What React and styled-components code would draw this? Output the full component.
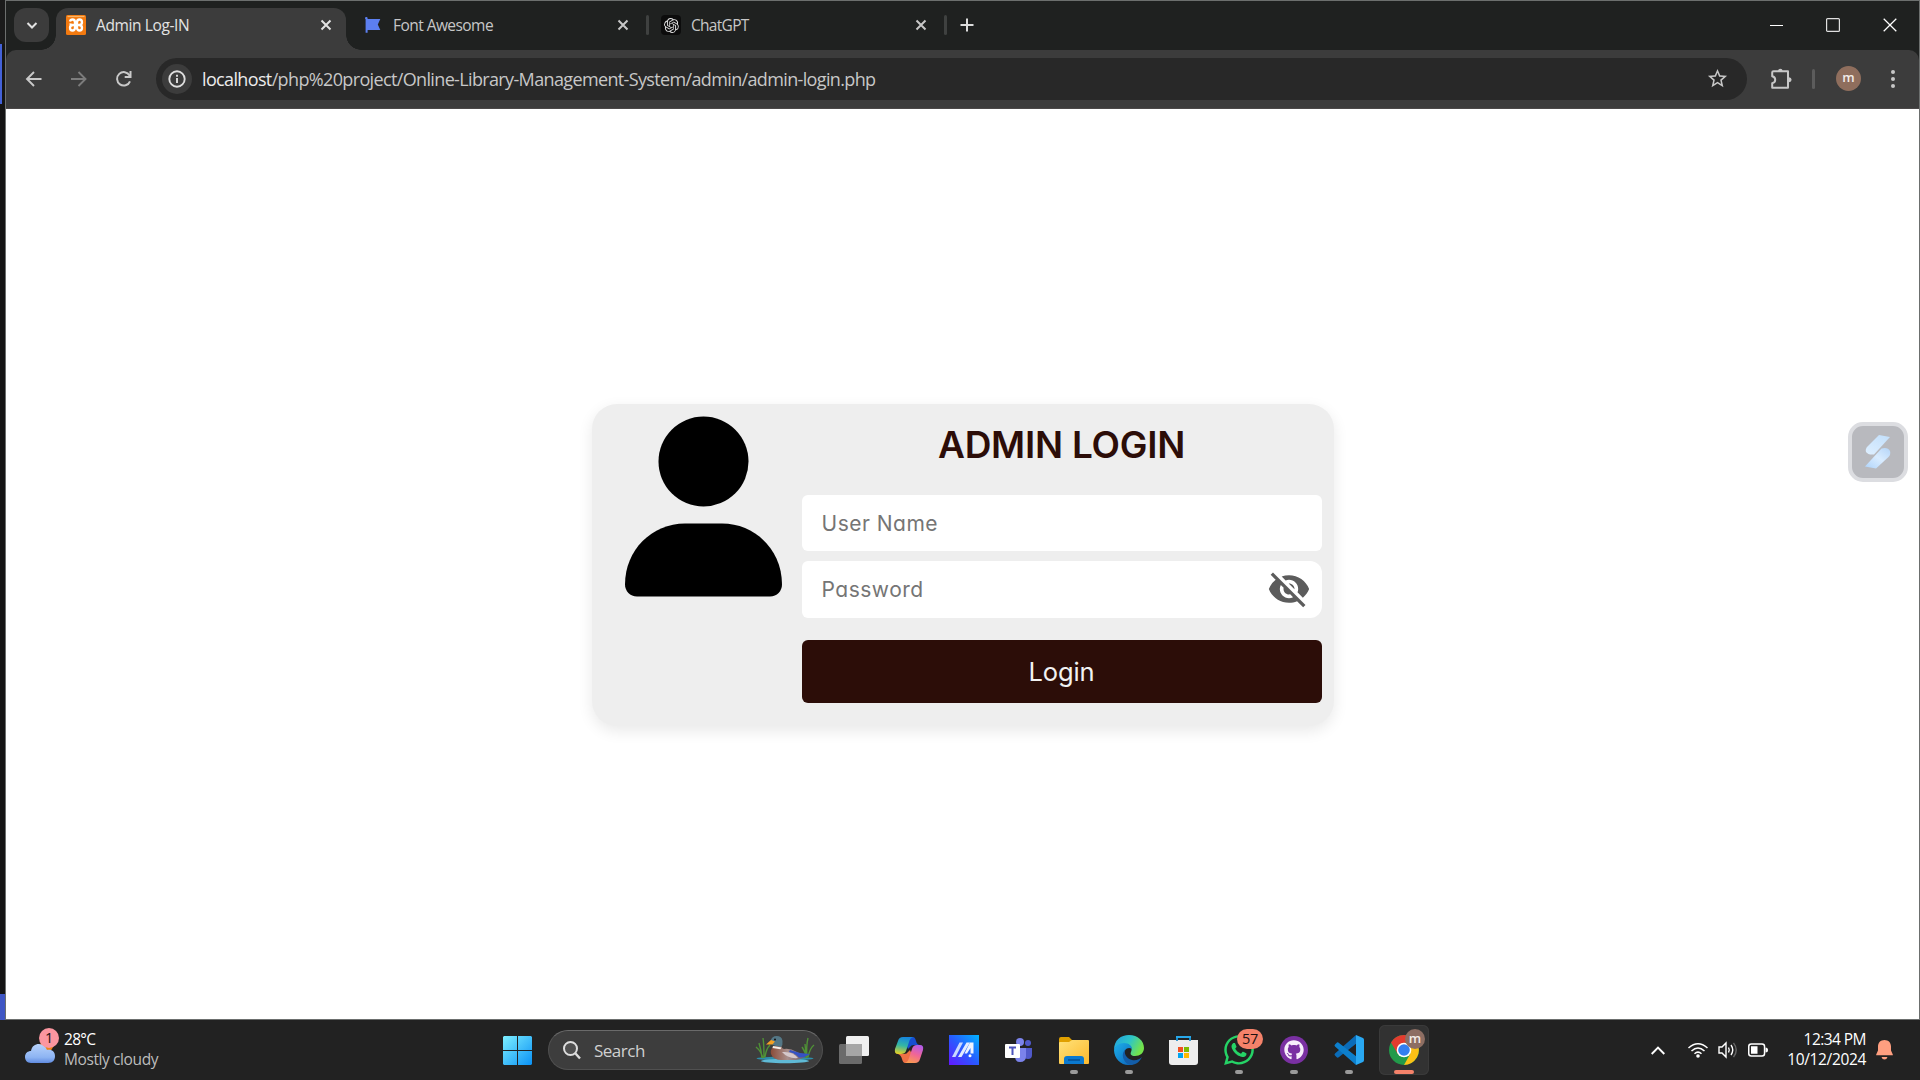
import React from "react";
import styled, { createGlobalStyle } from "styled-components";
import { MdVisibilityOff, MdStarBorder } from "react-icons/md";
import { FaGithub, FaWhatsapp } from "react-icons/fa";
import { SiOpenai } from "react-icons/si";

const uiFont = `"Open Sans", "Noto Sans", sans-serif`;
const pageFont = `Inter, "Liberation Sans", sans-serif`;

const GlobalStyle = createGlobalStyle`
  * { box-sizing: border-box; }
  html, body { margin: 0; padding: 0; background: #222; overflow: hidden; }
  button, input { font: inherit; border: 0; padding: 0; background: none; color: inherit; }
  svg { display: block; flex: none; overflow: visible; }
`;

const Desktop = styled.div`
  width: 1920px;
  height: 1080px;
  display: flex;
  flex-direction: column;
  font-family: ${uiFont};
`;

const Workspace = styled.div`
  display: flex;
  height: 1020px;
`;

const BackdropEdge = styled.div`
  width: 5px;
  display: flex;
  flex-direction: column;
  background: #141414;
`;

const EdgeSegment = styled.div`
  width: ${(p) => p.$width || 5}px;
  height: ${(p) => p.$height}px;
  background: ${(p) => p.$color};
`;

const BrowserWindow = styled.div`
  flex: 1;
  display: flex;
  flex-direction: column;
  border: 1px solid #6c6f6e;
  background: #1f2120;
`;

const TabStrip = styled.div`
  height: 49px;
  display: flex;
  padding: 7px 0 0 8px;
  background: #1f2120;
`;

const TabMenuButton = styled.button`
  width: 35px;
  height: 34px;
  margin-right: 7px;
  border-radius: 12px;
  background: #3c3c3c;
  display: flex;
  align-items: center;
  justify-content: center;
  color: #e3e3e3;
`;

const Tab = styled.div`
  position: relative;
  width: ${(p) => p.$width}px;
  height: 42px;
  padding: 0 ${(p) => p.$end || 12}px 8px ${(p) => p.$start || 10}px;
  display: flex;
  align-items: center;
  border-radius: 12px 12px 0 0;
  background: ${(p) => (p.$active ? "#3c3c3c" : "transparent")};
  color: ${(p) => (p.$active ? "#e3e3e3" : "#c7c7c7")};

  &::before,
  &::after {
    content: "";
    display: ${(p) => (p.$active ? "block" : "none")};
    position: absolute;
    bottom: 0;
    width: 15px;
    height: 15px;
  }
  &::before {
    left: -15px;
    background: radial-gradient(circle at 0 0, transparent 14.5px, #3c3c3c 15px);
  }
  &::after {
    right: -15px;
    background: radial-gradient(circle at 100% 0, transparent 14.5px, #3c3c3c 15px);
  }
`;

const TabIcon = styled.span`
  width: 20px;
  height: 20px;
  margin-right: 10px;
  display: flex;
  align-items: center;
  justify-content: center;
  border-radius: ${(p) => p.$radius || 0}px;
  background: ${(p) => p.$background || "transparent"};
  color: ${(p) => p.$color};
`;

const TabTitle = styled.span`
  flex: 1;
  font-size: 15.5px;
  line-height: 20px;
  letter-spacing: ${(p) => p.$spacing}px;
  white-space: nowrap;
`;

const CloseSlot = styled.button`
  width: 16px;
  height: 16px;
  display: flex;
  align-items: center;
  justify-content: center;
`;

const TabDivider = styled.span`
  width: 3px;
  height: 20px;
  margin: 7px ${(p) => p.$after}px 0 ${(p) => p.$before}px;
  border-radius: 2px;
  background: #3f4140;
`;

const NewTabButton = styled.button`
  width: 16px;
  height: 34px;
  display: flex;
  align-items: center;
  justify-content: center;
  color: #dcdcdc;
`;

const WindowControls = styled.div`
  margin-left: auto;
  padding: 0 22px 8px 0;
  display: flex;
  align-items: center;
  gap: 43px;
  color: #fff;
`;

const Toolbar = styled.div`
  height: 59px;
  padding: 8px 0 9px 20px;
  display: flex;
  align-items: center;
  background: #3c3c3c;
  border-radius: 10px 10px 0 0;
  border-bottom: 1px solid #4b4848;
`;

const NavButton = styled.button`
  width: 16px;
  margin-right: 29px;
  display: flex;
  justify-content: center;
  color: ${(p) => (p.$disabled ? "#7c7c7c" : "#c9c9c9")};
`;

const AddressBar = styled.div`
  width: 1591px;
  height: 42px;
  margin-left: -5px;
  padding: 0 18px 0 6px;
  display: flex;
  align-items: center;
  border-radius: 21px;
  background: #282828;
  color: #c7c7c7;
`;

const SiteInfo = styled.span`
  width: 30px;
  height: 30px;
  margin-right: 10px;
  border-radius: 50%;
  background: #3c3c3c;
  display: flex;
  align-items: center;
  justify-content: center;
`;

const Url = styled.span`
  flex: 1;
  font-size: 18px;
  letter-spacing: -0.64px;
  line-height: 24px;
  white-space: nowrap;
`;

const Host = styled.span`
  color: #ececec;
`;

const ToolbarActions = styled.div`
  display: flex;
  align-items: center;
  margin-left: 24px;
  color: #c7c7c7;
`;

const ToolbarDivider = styled.span`
  width: 3px;
  height: 20px;
  margin: 0 21px 0 20px;
  border-radius: 2px;
  background: #5c5c5c;
`;

const MenuButton = styled.button`
  margin-left: 30px;
  display: flex;
`;

const Avatar = styled.span`
  width: ${(p) => p.$size}px;
  height: ${(p) => p.$size}px;
  border-radius: 50%;
  background: ${(p) => p.$color || "#8f6e5d"};
  color: #f3ece8;
  font-size: 13px;
  font-weight: 600;
  line-height: ${(p) => p.$size - 2}px;
  text-align: center;
`;

const Page = styled.main`
  flex: 1;
  display: grid;
  grid-template-columns: 1fr 742px 1fr;
  padding-top: 295px;
  background: #fff;
  font-family: ${pageFont};
  font-feature-settings: "cv11";
`;

const LoginCard = styled.section`
  grid-column: 2;
  width: 742px;
  height: 322px;
  padding: 12px 12px 0 33px;
  display: flex;
  justify-content: space-between;
  border-radius: 25px;
  background: #eee;
  box-shadow: 0 5px 15px rgba(0, 0, 0, 0.09);
`;

const LoginForm = styled.div`
  width: 520px;
  display: flex;
  flex-direction: column;
`;

const Heading = styled.h1`
  height: 56px;
  margin: 0 0 23px;
  text-align: center;
  font-size: 37px;
  line-height: 58px;
  font-weight: 600;
  letter-spacing: -0.25px;
  color: #2c0d08;
`;

const Field = styled.label`
  height: ${(p) => p.$height}px;
  margin-bottom: ${(p) => p.$gap}px;
  padding: 0 11px ${(p) => p.$lift || 0}px 20px;
  display: flex;
  align-items: center;
  border-radius: ${(p) => p.$radius};
  background: #fff;
  color: #5c5c5c;
`;

const TextInput = styled.input`
  flex: 1;
  min-width: 0;
  height: 30px;
  outline: none;
  font-size: 21px;
  letter-spacing: ${(p) => p.$spacing}px;
  font-feature-settings: inherit;

  &::placeholder {
    color: #757575;
    opacity: 1;
  }
`;

const SubmitButton = styled.button`
  height: 63px;
  padding-bottom: 1px;
  border-radius: 6px;
  background: #2c0d08;
  color: #f2f2f2;
  font-size: 25.5px;
  letter-spacing: -0.1px;
`;

const SideWidget = styled.button`
  width: 60px;
  height: 60px;
  margin: 18px 11px 0 0;
  justify-self: end;
  display: flex;
  align-items: center;
  justify-content: center;
  border: 4px solid #dcdde1;
  border-radius: 15px;
  background: #b8b9be;
`;

const Taskbar = styled.footer`
  height: 60px;
  display: flex;
  align-items: center;
  background: #222;
  color: #fff;
`;

const Weather = styled.div`
  width: 478px;
  height: 60px;
  padding: 10px 0 0 25px;
  display: flex;
`;

const WeatherIcon = styled.div`
  width: 39px;
  padding-top: 14px;
  position: relative;
`;

const WeatherReport = styled.div`
  margin-top: -1px;
`;

const Badge = styled.span`
  position: absolute;
  left: ${(p) => p.$left}px;
  top: ${(p) => p.$top}px;
  width: ${(p) => p.$width}px;
  height: 20px;
  border-radius: 10px;
  background: ${(p) => p.$color};
  color: #1c1111;
  font-size: 14.5px;
  line-height: 20px;
  letter-spacing: -0.4px;
  text-align: center;
`;

const WeatherText = styled.div`
  font-size: 15.5px;
  line-height: 20px;
  letter-spacing: ${(p) => p.$spacing}px;
  color: ${(p) => p.$color};
`;

const StartButton = styled.button`
  width: 54px;
  display: flex;
  justify-content: flex-end;
`;

const SearchBox = styled.div`
  width: 275px;
  height: 40px;
  margin: 0 4px 0 16px;
  padding: 0 8px 0 14px;
  display: flex;
  align-items: center;
  border: 1px solid #505050;
  border-top-color: #6a6a6a;
  border-radius: 20px;
  background: #3d3d3d;
`;

const SearchLabel = styled.span`
  flex: 1;
  margin-left: 13px;
  font-size: 17px;
  letter-spacing: -0.5px;
  color: #d0d0d0;
`;

const AppList = styled.div`
  display: flex;
  padding-left: 2px;
`;

const TaskButton = styled.div`
  position: relative;
  width: 50px;
  height: 50px;
  margin-right: 5px;
  display: flex;
  align-items: center;
  justify-content: center;
  border-radius: 6px;
  background: ${(p) => (p.$active ? "#323232" : "transparent")};
  box-shadow: ${(p) => (p.$active ? "inset 0 0 0 1px #3a3a3a" : "none")};

  &::after {
    content: "";
    display: ${(p) => (p.$running ? "block" : "none")};
    position: absolute;
    bottom: 1px;
    left: 50%;
    width: ${(p) => (p.$active ? 20 : 8)}px;
    height: 4px;
    transform: translateX(-50%);
    border-radius: 2px;
    background: ${(p) => (p.$active ? "#f4826a" : "#9a9a9a")};
  }
`;

const Overlay = styled.span`
  position: absolute;
  left: 26px;
  top: 4px;
  display: flex;
`;

const Tray = styled.div`
  margin-left: auto;
  padding-right: 27px;
  display: flex;
  align-items: center;
  color: #fff;
`;

const TrayIcon = styled.span`
  display: flex;
  margin-right: ${(p) => p.$gap}px;
`;

const Clock = styled.div`
  width: 80px;
  margin: -2px 10px 0 0;
  text-align: right;
  font-size: 15.5px;
  line-height: 20px;
  white-space: nowrap;
`;

const ClockLine = styled.div`
  letter-spacing: ${(p) => p.$spacing}px;
`;

const CloseGlyph = ({ size = 10, weight = 2 }) => (
  <svg width={size} height={size} viewBox="0 0 10 10" fill="none" stroke="currentColor" strokeWidth={weight}>
    <path d="M.5.5l9 9M9.5.5l-9 9" />
  </svg>
);

const TabClose = () => (
  <CloseSlot>
    <CloseGlyph />
  </CloseSlot>
);

const ArrowGlyph = ({ flip }) => (
  <svg width="16" height="16" viewBox="0 0 16 16" fill="none" stroke="currentColor" strokeWidth="1.9">
    <path d={flip ? "M0 8h14M7.500 1l7 7-7 7" : "M15.500 8H1.500M8 1L1 8l7 7"} />
  </svg>
);

const ReloadGlyph = () => (
  <svg width="16" height="16" viewBox="0 0 16 16" fill="none" stroke="currentColor" strokeWidth="2">
    <path d="M14 10.300A6.700 6.700 0 1 1 13.600 4.500L14 5.500" />
    <path d="M14.500 0V6H8.700" />
  </svg>
);

const InfoGlyph = () => (
  <svg width="18" height="18" viewBox="0 0 18 18" fill="none" stroke="#dedede" strokeWidth="1.9">
    <circle cx="9" cy="9" r="7.700" />
    <path d="M9 8v5M9 4.800v1.900" />
  </svg>
);

const PuzzleGlyph = () => (
  <svg width="21" height="20" viewBox="0 0 21 20">
    <path
      d="M2.500 2.300H17V18.700H1.200V14.300Q4.200 13.600 4.200 10.800T1.200 7.300V3.500Q1.200 2.300 2.500 2.300Z"
      fill="none"
      stroke="currentColor"
      strokeWidth="2"
      strokeLinejoin="round"
    />
    <path d="M7 2Q7-.3 9.300-.3T11.600 2ZM18 8.200Q20.600 8.400 20.600 10.800T18 13.300Z" fill="currentColor" />
  </svg>
);

const DotsGlyph = () => (
  <svg width="4" height="18" viewBox="0 0 4 18" fill="currentColor">
    <circle cx="2" cy="2" r="2" />
    <circle cx="2" cy="9" r="2" />
    <circle cx="2" cy="16" r="2" />
  </svg>
);

const XamppMark = () => (
  <svg width="20" height="20" viewBox="0 0 20 20" fill="none">
    <rect width="20" height="20" rx="1.500" fill="#f37a10" />
    <path d="M1.500 1.500H18.500" stroke="#f9b568" strokeWidth="1.200" />
    <path
      d="M4 6.500Q4.500 4.500 6.500 4.500Q9 4.500 9 7.500V12.500Q9 15.500 6.500 15.500T4 12.700Q4 10 7 10H13Q16 10 16 12.700T13.500 15.500Q11 15.500 11 12.500V7.500Q11 4.500 13.500 4.500T16 7.300Q16 10 13 10H7Q4.500 10 4 8.500"
      stroke="#fff"
      strokeWidth="2.300"
    />
  </svg>
);

const FlagMark = () => (
  <svg width="16" height="16" viewBox="0 0 16 16" fill="#5c7ff0">
    <path d="M0 1.200A1.300 1.300 0 0 1 2.600 1.200V2H15.300L12.800 7.500L15.300 13H2.600V15.800H.6V2.200Q0 1.800 0 1.200Z" />
  </svg>
);

const PersonFigure = () => (
  <svg width="157" height="181" viewBox="0 0 157 181">
    <circle cx="78.500" cy="45.500" r="45" />
    <path d="M60 107.500H97C130 107.500 157 134 157 168.500C157 175 152 180.500 145 180.500H12C5 180.500 0 175 0 168.500C0 134 27 107.500 60 107.500Z" />
  </svg>
);

const WidgetGlyph = () => (
  <svg width="26" height="34" viewBox="0 0 26 34">
    <defs>
      <linearGradient id="widgetUpper" x1=".8" y1="0" x2=".2" y2="1">
        <stop offset="0" stopColor="#c4e0fb" />
        <stop offset="1" stopColor="#dceeff" />
      </linearGradient>
      <linearGradient id="widgetLower" x1="1" y1="0" x2=".1" y2="1">
        <stop offset="0" stopColor="#b5d5f8" />
        <stop offset=".5" stopColor="#d9ecff" />
        <stop offset="1" stopColor="#b3d6fb" />
      </linearGradient>
    </defs>
    <path d="M14 0L25 2L9 19.500Q3 20 1 17Q0 14 2.500 11.500Z" fill="url(#widgetUpper)" />
    <path d="M16.500 13.500Q23 12 25 16Q26 19.500 23.500 22L11 33.500L0 31.500Z" fill="url(#widgetLower)" />
  </svg>
);

const CloudIcon = () => (
  <svg width="30" height="20" viewBox="0 0 30 20">
    <defs>
      <linearGradient id="cloud" x2="0" y2="1">
        <stop offset="0" stopColor="#b7d2fb" />
        <stop offset=".7" stopColor="#8db4f3" />
        <stop offset="1" stopColor="#608be0" />
      </linearGradient>
    </defs>
    <circle cx="22" cy="1" r="6.500" fill="#f08018" />
    <path d="M6 19C2 19 0 16 0 13C0 9 3 7 6 7C7 2 10 0 14 0C18 0 21 3 22 6C27 5 30 8 30 12C30 16 28 19 23 19Z" fill="url(#cloud)" />
  </svg>
);

const WindowsIcon = () => (
  <svg width="29" height="29" viewBox="0 0 29 29">
    <defs>
      <linearGradient id="win" gradientUnits="userSpaceOnUse" x1="0" y1="0" x2="29" y2="29">
        <stop offset="0" stopColor="#7defff" />
        <stop offset="1" stopColor="#0a91f5" />
      </linearGradient>
    </defs>
    <path d="M1 0H14V14H0V1ZM15 0H28L29 1V14H15ZM0 15H14V29H1L0 28ZM15 15H29V28L28 29H15Z" fill="url(#win)" />
  </svg>
);

const SearchGlyph = () => (
  <svg width="18" height="18" viewBox="0 0 18 18" fill="none" stroke="#dedede" strokeWidth="2">
    <circle cx="7.500" cy="7.500" r="6.500" fill="#505050" />
    <path d="M12.300 12.300L17 17.500" strokeWidth="2.400" />
  </svg>
);

const DuckIcon = () => (
  <svg width="58" height="28" viewBox="0 0 58 28">
    <defs>
      <linearGradient id="duckBody" x2="1">
        <stop offset="0" stopColor="#8b4c38" />
        <stop offset=".45" stopColor="#a98f8c" />
        <stop offset="1" stopColor="#5e5264" />
      </linearGradient>
    </defs>
    <ellipse cx="29" cy="22.500" rx="28.500" ry="1.800" fill="#2d8fab" />
    <ellipse cx="29" cy="25" rx="24" ry="2.200" fill="#5fbad6" />
    <g stroke="#4f9136" strokeWidth="1.400" fill="none">
      <path d="M8 22Q8 8 7 2M7 22Q5 15 0 11M9 21Q10 13 14 9M6 22Q5 13 3 7" />
      <path d="M51 22Q50 10 52 2M51 21Q48 14 46 11M52 21Q54 12 58 9M50 22Q50 16 49 8" />
    </g>
    <path d="M17 11Q14 14 15 18Q17 24 26 24H40Q48 23 52 18Q45 19 41 16Q34 12 28 13Q24 12 26 6Z" fill="url(#duckBody)" />
    <path d="M34 14L44 17L54 18Q48 22 43 21.500Q39 17 33 16Z" fill="#3552c4" />
    <path d="M26 16Q37 15 42 22Q32 23 26 16Z" fill="#d5c8cb" />
    <path d="M14.500 5Q16 0 20.500 0Q26 0 26.500 5Q27 9 25 11L18 9.500Q15 8 14.500 5Z" fill="#547786" />
    <path d="M15 4L10 8.500L16.500 8.500L19 5.500Z" fill="#f4a124" />
    <path d="M17 10L25.500 11.500L24.500 13.200L16.500 12Z" fill="#f4eee9" />
    <circle cx="19" cy="3.500" r="1" fill="#111" />
  </svg>
);

const TaskViewIcon = () => (
  <svg width="30" height="28" viewBox="0 0 30 28">
    <rect x="7" width="23" height="20" rx="1.500" fill="#f0f0f0" />
    <rect y="8" width="23" height="20" rx="1.500" fill="#6b6b6b" />
    <path d="M7 8H23V20H7Z" fill="#a6a6a6" />
  </svg>
);

const CopilotIcon = () => (
  <svg width="28" height="26" viewBox="0 0 28 26">
    <defs>
      <linearGradient id="copA" x1=".5" y1="0" x2=".3" y2="1">
        <stop offset="0" stopColor="#1686df" />
        <stop offset=".5" stopColor="#34b7a3" />
        <stop offset="1" stopColor="#e2cf27" />
      </linearGradient>
      <linearGradient id="copB" x1=".7" y1="0" x2=".3" y2="1">
        <stop offset="0" stopColor="#b45be8" />
        <stop offset=".5" stopColor="#f06696" />
        <stop offset="1" stopColor="#fa9b50" />
      </linearGradient>
    </defs>
    <path d="M15 0H18Q20 0 21 4Q22 8 25 8H19Q16 8 15 10L13 12L10 5Q11 0 15 0Z" fill="#164ed0" />
    <path d="M8 0H18Q15 1 14 5L11 14Q10 17 6 17H3Q-1 17 0 12L3 4Q4 0 8 0Z" fill="url(#copA)" />
    <path d="M13 26H10Q8 26 7 22Q6 18 3 17H9Q12 17 13 15L15 13L18 20Z" fill="#ed7045" />
    <path d="M20 26H10Q13 25 14 21L17 12Q18 8 22 8H25Q29 8 28 13L25 22Q24 26 20 26Z" fill="url(#copB)" />
  </svg>
);

const AsusIcon = () => (
  <svg width="30" height="30" viewBox="0 0 30 30">
    <defs>
      <linearGradient id="asus" x1="0" y1="1" x2="1" y2="0">
        <stop offset="0" stopColor="#6417ff" />
        <stop offset=".5" stopColor="#285bff" />
        <stop offset="1" stopColor="#00b4ff" />
      </linearGradient>
    </defs>
    <path d="M0 0H30V30H0Z" fill="url(#asus)" />
    <path d="M3 22L10.500 7.500H14L6.500 22Z" fill="#c9d8ff" />
    <path d="M9 22L17.500 7.500H21L12.500 22Z" fill="#e3ebff" />
    <path d="M21 7.500H24.500V18.500H21.500V13L18 18.500H15.500Z" fill="#eef3ff" />
    <circle cx="21" cy="20.800" r="1.500" fill="#fff" />
  </svg>
);

const TeamsIcon = () => (
  <svg width="28" height="25" viewBox="0 0 28 25">
    <circle cx="23" cy="5" r="3" fill="#5059c9" />
    <path d="M18 10H27V17Q27 21 23 21Q20 21 18 19Z" fill="#5059c9" />
    <circle cx="15" cy="4" r="4" fill="#7b83eb" />
    <path d="M10 10H21V18Q21 24 15 24Q10 24 10 18Z" fill="#7b83eb" />
    <rect y="6" width="15" height="14" rx="1" fill="#fff" />
    <path d="M4 9.500H11M7.500 9.500V17" stroke="#4b53bc" strokeWidth="2" />
  </svg>
);

const FolderIcon = () => (
  <svg width="30" height="27" viewBox="0 0 30 27">
    <defs>
      <linearGradient id="folder" x2="1" y2="1">
        <stop offset="0" stopColor="#ffe27a" />
        <stop offset="1" stopColor="#fdb92c" />
      </linearGradient>
    </defs>
    <path d="M0 2Q0 0 2 0H10L13 3H28V12H0Z" fill="#e0a000" />
    <path d="M0 6Q0 5 1 5H10L13 3H29Q30 3 30 4V26Q30 27 29 27H1Q0 27 0 26Z" fill="url(#folder)" />
    <path d="M5 27V22Q5 19 8 19H22Q25 19 25 22V27Z" fill="#0b79cf" />
    <path d="M9 23H21" stroke="#064f93" strokeWidth="1.500" />
  </svg>
);

const EdgeIcon = () => (
  <svg width="30" height="30" viewBox="0 0 30 30">
    <defs>
      <linearGradient id="edgeTop" x2="1" y2=".4">
        <stop offset="0" stopColor="#229fe1" />
        <stop offset=".55" stopColor="#2dc5c8" />
        <stop offset="1" stopColor="#73e34b" />
      </linearGradient>
      <linearGradient id="edgeSide" x2="1" y2="1">
        <stop offset="0" stopColor="#1db0ea" />
        <stop offset="1" stopColor="#0b60b8" />
      </linearGradient>
    </defs>
    <path d="M0 15C0 5 7 0 15 0C24 0 30 6 30 13C30 18 26 21 21 21C17 21 16 19 17 17C19 13 16 9 11 9C5 9 1 12 0 15Z" fill="url(#edgeTop)" />
    <path d="M0 15C1 11 5 8 10 8C15 8 18 11 18 14C14 11 9 15 10 21C11 26 17 28 21 28C12 34 0 26 0 15Z" fill="url(#edgeSide)" />
    <path d="M12 14C9 17 12 24 18 25C22 26 26 24 28 22C25 28 21 30 16 30C9 28 6 18 12 14Z" fill="#135da8" />
  </svg>
);

const StoreIcon = () => (
  <svg width="30" height="29" viewBox="0 0 30 29">
    <path d="M8 6V1H21V6" fill="none" stroke="#28a8ea" strokeWidth="2" />
    <path d="M0 4H29V26Q29 29 26 29H3Q0 29 0 26Z" fill="#ededed" />
    <path d="M8 5V2M21 5V2" stroke="#1687c4" strokeWidth="1.600" />
    <path d="M9 11h5v5H9z" fill="#f25022" />
    <path d="M15 11h5v5h-5z" fill="#7fba00" />
    <path d="M9 17h5v5H9z" fill="#00a4ef" />
    <path d="M15 17h5v5h-5z" fill="#ffb900" />
  </svg>
);

const GithubIcon = () => (
  <svg width="28" height="28" viewBox="0 0 28 28">
    <circle cx="14" cy="14" r="14" fill="#7a30a2" />
    <g transform="translate(4 4)" color="#f7eefb">
      <FaGithub size={20} />
    </g>
  </svg>
);

const VsCodeIcon = () => (
  <svg width="30" height="30" viewBox="0 0 30 30">
    <path d="M22 0L1 18.500Q0 19.500 1 20.500L3 22.500Q4 23 5 22L23 8Z" fill="#0b6cb8" />
    <path d="M22 30L1 11.500Q0 10.500 1 9.500L3 7.500Q4 7 5 8L23 22Z" fill="#0d7fcc" />
    <path d="M22 0L29 3Q30 3.500 30 5V25Q30 26.500 29 27L22 30Z" fill="#29a8f2" />
  </svg>
);

const ChromeIcon = () => (
  <svg width="30" height="30" viewBox="0 0 30 30">
    <circle cx="15" cy="15" r="15" fill="#229a4a" />
    <path d="M15 7.700H28A15 15 0 0 1 15 30L21.300 18.700Z" fill="#fbc116" />
    <path d="M2 7.500A15 15 0 0 1 28.100 7.700H15L8.700 18.700Z" fill="#e33b2e" />
    <circle cx="15" cy="15" r="7.300" fill="#fff" />
    <circle cx="15" cy="15" r="5.800" fill="#337ef0" />
  </svg>
);

const WifiIcon = () => (
  <svg width="20" height="15" viewBox="0 0 20 15" fill="none" stroke="currentColor" strokeWidth="1.500">
    <path d="M.5 5Q10-3.500 19.500 5M3.500 8Q10 2 16.500 8M6.500 10.800Q10 7.500 13.500 10.800" />
    <circle cx="10" cy="13" r="1.800" fill="currentColor" stroke="none" />
  </svg>
);

const SpeakerIcon = () => (
  <svg width="20" height="16" viewBox="0 0 20 16" fill="none" stroke="currentColor" strokeWidth="1.400">
    <path d="M1 5H4L8 1V15L4 11H1Z" />
    <path d="M10.500 5.500Q12 8 10.500 10.500M13 3Q16.500 8 13 13" />
    <path d="M15.500.8Q21 8 15.500 15.200" stroke="#666" />
  </svg>
);

const BatteryIcon = () => (
  <svg width="20" height="14" viewBox="0 0 20 14">
    <rect x=".75" y="1" width="15.800" height="12" rx="2.500" fill="none" stroke="currentColor" strokeWidth="1.500" />
    <path d="M3 3.200H9.500V10.800H3ZM17.500 4.500Q20 4.500 20 7T17.500 9.500Z" fill="currentColor" />
  </svg>
);

const BellIcon = () => (
  <svg width="17" height="20" viewBox="0 0 17 20" fill="#ff9f80">
    <path d="M8.500 0C4.500 0 2 2.800 2 6.500V10.500L.2 14.500V15.300H16.800V14.500L15 10.500V6.500C15 2.800 12.500 0 8.500 0ZM5.500 17H11.500Q10.800 19.500 8.500 19.500T5.500 17Z" />
  </svg>
);

const apps = [
  { id: "taskview", icon: <TaskViewIcon /> },
  { id: "copilot", icon: <CopilotIcon /> },
  { id: "asus", icon: <AsusIcon /> },
  { id: "teams", icon: <TeamsIcon /> },
  { id: "explorer", icon: <FolderIcon />, running: true },
  { id: "edge", icon: <EdgeIcon />, running: true },
  { id: "store", icon: <StoreIcon /> },
  {
    id: "whatsapp",
    icon: <FaWhatsapp size={34} color="#25d366" />,
    running: true,
    overlay: <Badge $left={23} $top={4} $width={26} $color="#f4826a">57</Badge>,
  },
  { id: "github", icon: <GithubIcon />, running: true },
  { id: "vscode", icon: <VsCodeIcon />, running: true },
  {
    id: "chrome",
    icon: <ChromeIcon />,
    running: true,
    active: true,
    overlay: (
      <Overlay>
        <Avatar $size={20} $color="#8d6e63">m</Avatar>
      </Overlay>
    ),
  },
];

export default function App() {
  return (
    <Desktop>
      <GlobalStyle />
      <Workspace>
        <BackdropEdge>
          <EdgeSegment $height={44} $color="#1b1b1b" />
          <EdgeSegment $height={60} $width={2} $color="#4361d8" />
          <EdgeSegment $height={890} $color="#141414" />
          <EdgeSegment $height={26} $color="#3f56c4" />
        </BackdropEdge>
        <BrowserWindow>
          <TabStrip>
            <TabMenuButton>
              <svg width="10" height="7" viewBox="0 0 10 7" fill="none" stroke="currentColor" strokeWidth="2">
                <path d="M.5 1L5 5.500L9.500 1" />
              </svg>
            </TabMenuButton>
            <Tab $active $width={290}>
              <TabIcon><XamppMark /></TabIcon>
              <TabTitle $spacing={-0.38}>Admin Log-IN</TabTitle>
              <TabClose />
            </Tab>
            <Tab $width={300} $start={17} $end={15}>
              <TabIcon><FlagMark /></TabIcon>
              <TabTitle $spacing={-0.55}>Font Awesome</TabTitle>
              <TabClose />
            </Tab>
            <TabDivider $before={0} $after={2} />
            <Tab $width={290}>
              <TabIcon $background="#0c0c0c" $radius={4} $color="#e0e0e0"><SiOpenai size={15} /></TabIcon>
              <TabTitle $spacing={-0.7}>ChatGPT</TabTitle>
              <TabClose />
            </Tab>
            <TabDivider $before={3} $after={12} />
            <NewTabButton>
              <svg width="14" height="14" viewBox="0 0 14 14" stroke="currentColor" strokeWidth="2">
                <path d="M7 .5v13M.5 7h13" />
              </svg>
            </NewTabButton>
            <WindowControls>
              <svg width="13" height="13" viewBox="0 0 13 13" stroke="#fff">
                <path d="M0 6.500h13" />
              </svg>
              <svg width="14" height="14" viewBox="0 0 14 14" fill="none" stroke="#e0e0e0" strokeWidth="1.200">
                <rect x=".6" y=".6" width="12.800" height="12.800" rx="1" />
              </svg>
              <CloseGlyph size={14} weight={0.9} />
            </WindowControls>
          </TabStrip>
          <Toolbar>
            <NavButton><ArrowGlyph /></NavButton>
            <NavButton $disabled><ArrowGlyph flip /></NavButton>
            <NavButton><ReloadGlyph /></NavButton>
            <AddressBar>
              <SiteInfo><InfoGlyph /></SiteInfo>
              <Url>
                <Host>localhost</Host>/php%20project/Online-Library-Management-System/admin/admin-login.php
              </Url>
              <MdStarBorder size={23} />
            </AddressBar>
            <ToolbarActions>
              <PuzzleGlyph />
              <ToolbarDivider />
              <Avatar $size={25}>m</Avatar>
              <MenuButton><DotsGlyph /></MenuButton>
            </ToolbarActions>
          </Toolbar>
          <Page>
            <LoginCard>
              <PersonFigure />
              <LoginForm>
                <Heading>ADMIN LOGIN</Heading>
                <Field $height={56} $gap={10} $radius="6px">
                  <TextInput placeholder="User Name" $spacing={0.5} />
                </Field>
                <Field $height={57} $gap={22} $lift={1} $radius="6px 12px 12px 6px">
                  <TextInput placeholder="Password" $spacing={0.5} />
                  <MdVisibilityOff size={44} />
                </Field>
                <SubmitButton>Login</SubmitButton>
              </LoginForm>
            </LoginCard>
            <SideWidget><WidgetGlyph /></SideWidget>
          </Page>
        </BrowserWindow>
      </Workspace>
      <Taskbar>
        <Weather>
          <WeatherIcon>
            <CloudIcon />
            <Badge $left={14} $top={-2} $width={20} $color="#fb96a0">1</Badge>
          </WeatherIcon>
          <WeatherReport>
            <WeatherText $color="#fff" $spacing={-0.7}>28°C</WeatherText>
            <WeatherText $color="#bdbdbd" $spacing={-0.4}>Mostly cloudy</WeatherText>
          </WeatherReport>
        </Weather>
        <StartButton><WindowsIcon /></StartButton>
        <SearchBox>
          <SearchGlyph />
          <SearchLabel>Search</SearchLabel>
          <DuckIcon />
        </SearchBox>
        <AppList>
          {apps.map((app) => (
            <TaskButton key={app.id} $running={app.running} $active={app.active}>
              {app.icon}
              {app.overlay}
            </TaskButton>
          ))}
        </AppList>
        <Tray>
          <TrayIcon $gap={23}>
            <svg width="14" height="9" viewBox="0 0 14 9" fill="none" stroke="currentColor" strokeWidth="1.900">
              <path d="M.7 8L7 1.500L13.300 8" />
            </svg>
          </TrayIcon>
          <TrayIcon $gap={10}><WifiIcon /></TrayIcon>
          <TrayIcon $gap={10}><SpeakerIcon /></TrayIcon>
          <TrayIcon $gap={18}><BatteryIcon /></TrayIcon>
          <Clock>
            <ClockLine $spacing={-0.55}>12:34 PM</ClockLine>
            <ClockLine $spacing={-0.35}>10/12/2024</ClockLine>
          </Clock>
          <BellIcon />
        </Tray>
      </Taskbar>
    </Desktop>
  );
}
